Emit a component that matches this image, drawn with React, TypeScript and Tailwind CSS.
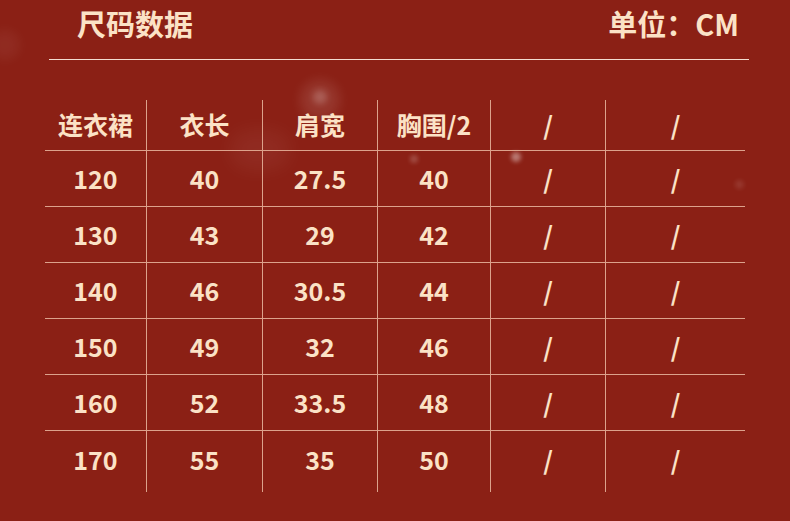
import React from "react";

const cols = ["w-[102px]", "w-[116px]", "w-[115px]", "w-[113px]", "w-[115px]", "w-[139px]"];
const header = ["连衣裙", "衣长", "肩宽", "胸围/2", "/", "/"];
const rows = [
  ["120", "40", "27.5", "40", "/", "/"],
  ["130", "43", "29", "42", "/", "/"],
  ["140", "46", "30.5", "44", "/", "/"],
  ["150", "49", "32", "46", "/", "/"],
  ["160", "52", "33.5", "48", "/", "/"],
  ["170", "55", "35", "50", "/", "/"],
];

function Row({ cells, h, last }: { cells: string[]; h: string; last?: boolean }) {
  return (
    <div className={`flex ${h} ${last ? "" : "border-b border-[#dca28c]"}`}>
      {cells.map((c, i) => (
        <div
          key={i}
          className={`${cols[i]} flex items-center justify-center ${last ? "pb-[3px]" : ""} ${i < 5 ? "border-r border-[#dca28c]" : ""}`}
        >
          {c}
        </div>
      ))}
    </div>
  );
}

export default function App() {
  return (
    <div
      className="relative w-[790px] h-[521px] overflow-hidden bg-[#8b2015] text-[#fbe2c6]"
      style={{ fontFamily: '"Noto Sans CJK SC", "Noto Sans", sans-serif' }}
    >
      <div className="absolute left-[300px] top-[80px] w-[40px] h-[40px] rounded-full bg-white/10 blur-[6px]" />
      <div className="absolute left-[313px] top-[90px] w-[14px] h-[14px] rounded-full bg-white/20 blur-[3px]" />
      <div className="absolute left-[511px] top-[152px] w-[10px] h-[10px] rounded-full bg-white/40 blur-[2px]" />
      <div className="absolute left-[410px] top-[155px] w-[8px] h-[8px] rounded-full bg-white/20 blur-[2px]" />
      <div className="absolute left-[735px] top-[180px] w-[9px] h-[9px] rounded-full bg-white/10 blur-[2px]" />
      <div className="absolute left-[-10px] top-[30px] w-[30px] h-[30px] rounded-full bg-white/5 blur-[6px]" />
      <div className="absolute left-[230px] top-[130px] w-[60px] h-[40px] rounded-full bg-white/5 blur-[10px]" />

      <div className="relative flex items-center justify-between pl-[77px] pr-[51px] h-[47px] text-[29px] font-semibold leading-none">
        <span>尺码数据</span>
        <span>单位：CM</span>
      </div>
      <div className="relative mt-[12px] ml-[49px] w-[700px] h-[1px] bg-[#f3ddd0]" />

      <div className="relative mt-[40px] ml-[45px] w-[700px] text-[25px] font-semibold">
        <Row cells={header} h="h-[51px]" />
        {rows.map((r, i) => (
          <Row key={i} cells={r} h={i === rows.length - 1 ? "h-[61px]" : "h-[56px]"} last={i === rows.length - 1} />
        ))}
      </div>
    </div>
  );
}
